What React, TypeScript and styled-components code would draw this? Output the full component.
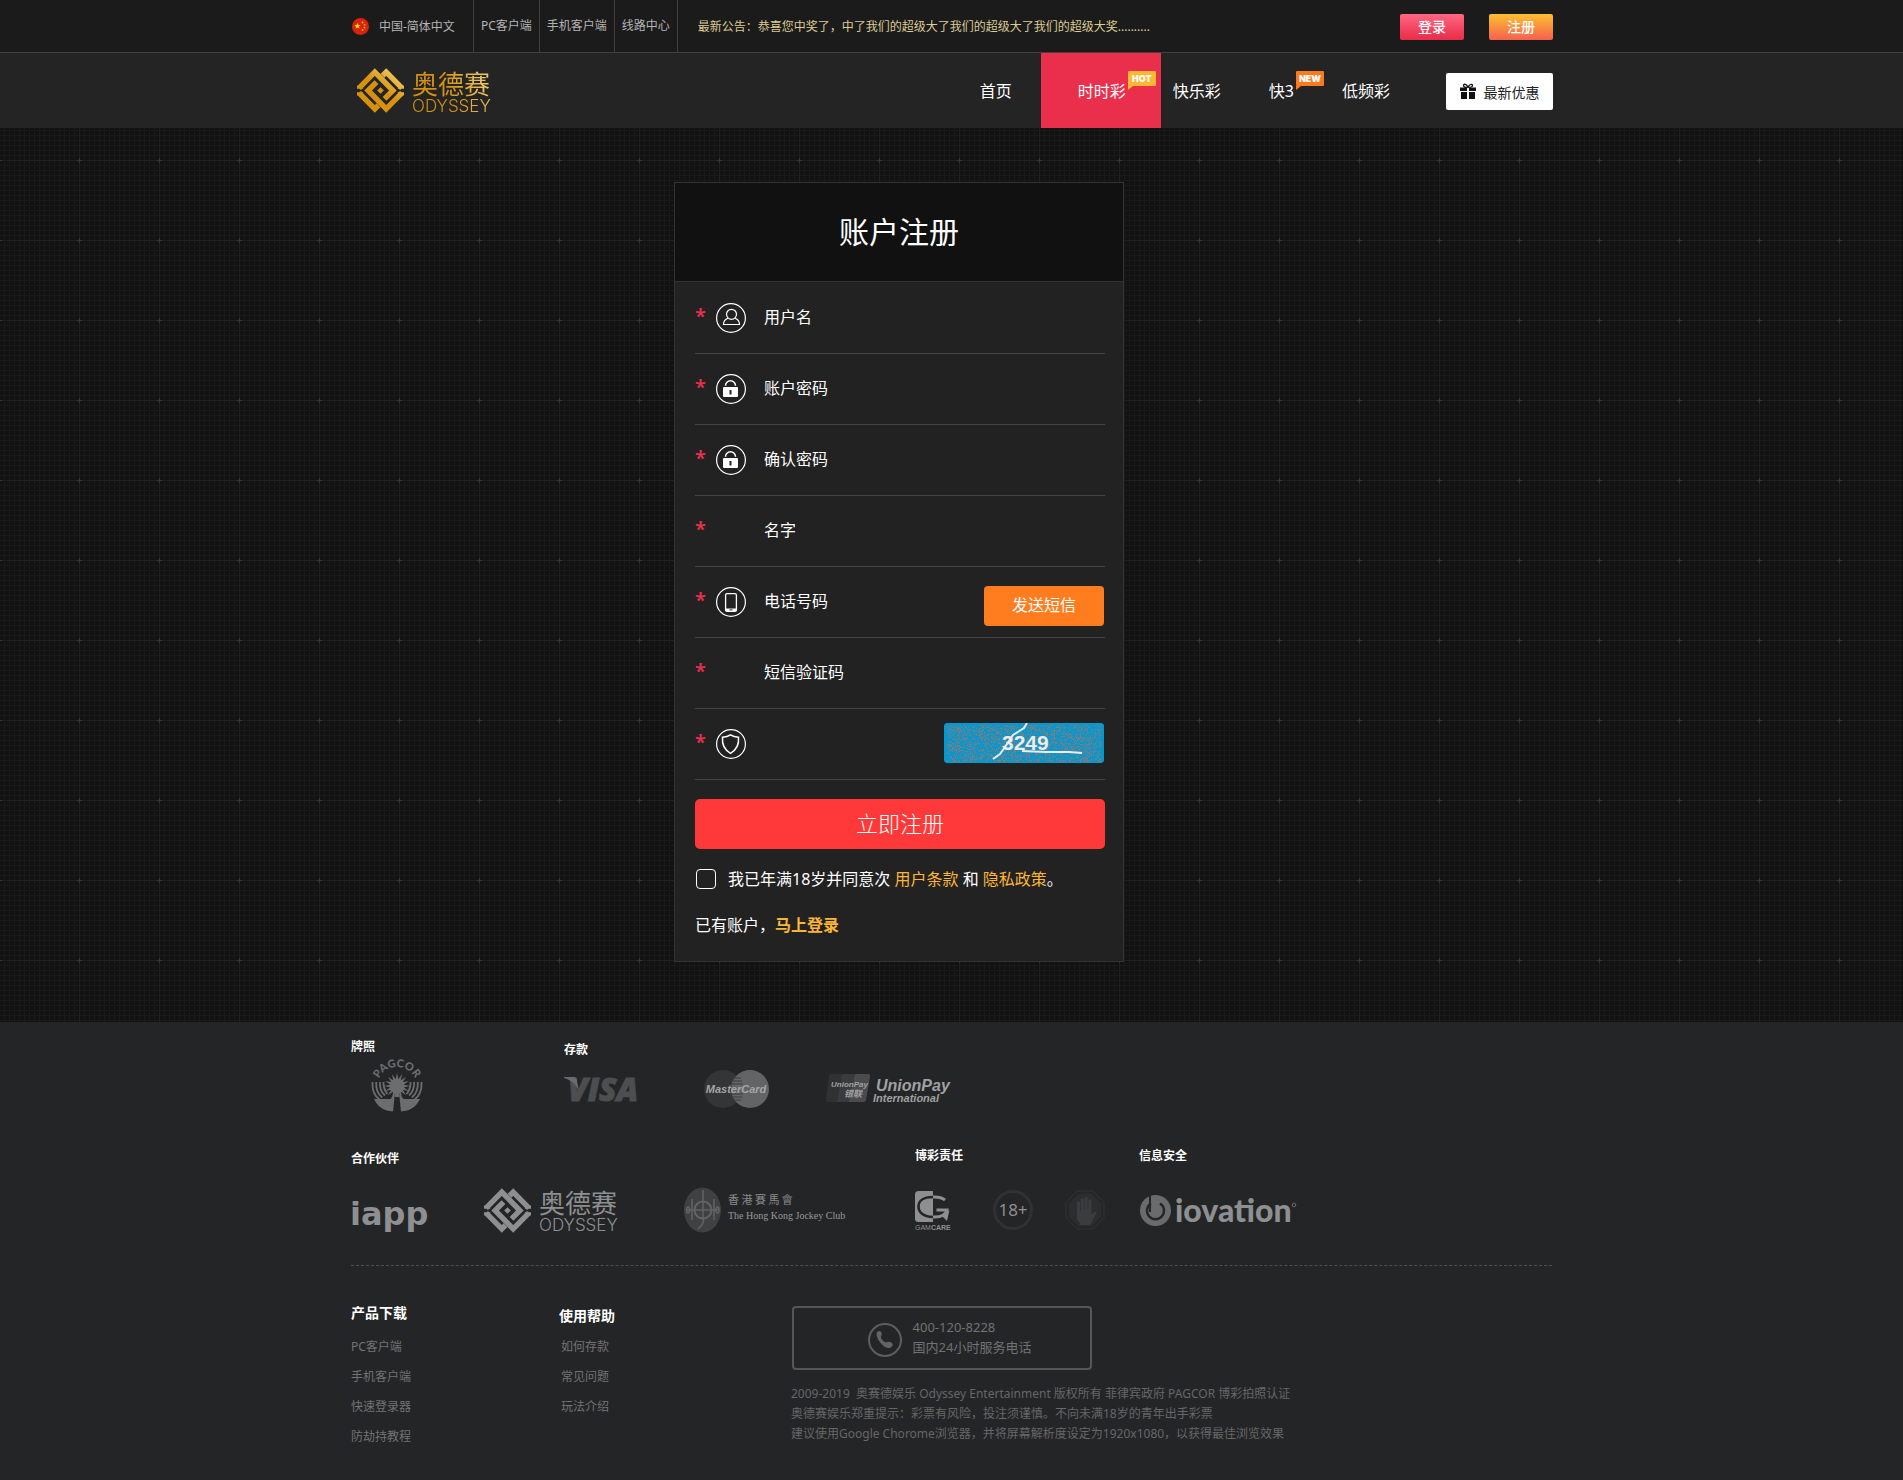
import React from "react";
import styled, { createGlobalStyle } from "styled-components";

const GlobalStyle = createGlobalStyle`
  *, *::before, *::after { box-sizing: border-box; }
  html { background: #121212; }
  body {
    margin: 0;
    min-height: 100vh;
    font-family: "Noto Sans", "Noto Sans CJK SC", sans-serif;
    font-size: 12px;
    line-height: 18px;
    color: #fff;
    background-color: #121212;
    background-image:
      conic-gradient(at 5px 1px, transparent 0 270deg, #373737 270deg 360deg),
      conic-gradient(at 1px 5px, transparent 0 270deg, #373737 270deg 360deg),
      linear-gradient(to right, #202020 1px, transparent 1px),
      linear-gradient(to bottom, #202020 1px, transparent 1px),
      linear-gradient(to right, #191919 1px, transparent 1px),
      linear-gradient(to bottom, #191919 1px, transparent 1px);
    background-size: 80px 80px, 80px 80px, 80px 80px, 80px 80px, 5px 5px, 5px 5px;
    background-position: 77px 0, 79px 78px, 79px 0, 0 0, 4px 0, 0 0;
  }
  a { color: inherit; text-decoration: none; }
  button, input { font-family: inherit; margin: 0; }
  button { cursor: pointer; border: 0; padding: 0; }
  ul { list-style: none; margin: 0; padding: 0; }
  h1, h2, p { margin: 0; }
  svg { display: block; overflow: visible; }
`;

const Container = styled.div`
  width: 100%;
  max-width: 1203px;
  margin: 0 auto;
`;

/* ---------- top bar ---------- */

const TopBar = styled.div`
  background: #1b1b1b;
  border-bottom: 1px solid #404040;
`;

const TopInner = styled(Container)`
  display: flex;
  align-items: center;
  height: 52px;
`;

const Language = styled.button`
  display: flex;
  align-items: center;
  gap: 10px;
  height: 100%;
  padding: 0 18px 0 2px;
  background: none;
  color: #b4b4b4;
  font-size: 12px;
  border-right: 1px solid #404040;
`;

const TopLink = styled.a`
  display: flex;
  align-items: center;
  height: 100%;
  padding: 0 7px;
  color: #b4b4b4;
  border-right: 1px solid #404040;
`;

const Notice = styled.p`
  margin-left: 20px;
  padding-top: 2px;
  color: #dccb96;
`;

const AuthButtons = styled.div`
  display: flex;
  gap: 25px;
  margin-left: auto;
  padding-top: 2px;
`;

const AuthButton = styled.button<{ $from: string; $to: string }>`
  width: 64px;
  height: 26px;
  border-radius: 2px;
  color: #fff;
  font-size: 14px;
  line-height: 24px;
  font-weight: 500;
  background: linear-gradient(${(p) => p.$from}, ${(p) => p.$to});
`;

/* ---------- navigation ---------- */

const Header = styled.header`
  background: #242424;
`;

const HeaderInner = styled(Container)`
  display: flex;
  align-items: center;
  height: 75px;
  padding-left: 7px;
`;

const Brand = styled.div`
  display: flex;
  align-items: center;
  gap: 8px;
`;

const BrandWords = styled.div<{ $muted?: boolean }>`
  display: flex;
  flex-direction: column;
  padding-top: 4px;
  color: ${(p) => (p.$muted ? "#8e8f91" : "transparent")};
  background: ${(p) => (p.$muted ? "none" : "linear-gradient(75deg, #d6920f 45%, #f2d277)")};
  background-clip: text;
  -webkit-background-clip: text;
`;

const BrandName = styled.span`
  font-family: "Noto Sans CJK SC", sans-serif;
  font-size: 26px;
  line-height: 26px;
`;

const BrandLatin = styled.span`
  font-family: Inter, sans-serif;
  font-size: 17px;
  line-height: 20px;
  font-weight: 300;
`;

const Nav = styled.nav`
  display: flex;
  align-items: center;
  height: 100%;
  margin-left: auto;
`;

const NavLink = styled.a<{ $active?: boolean }>`
  display: flex;
  align-items: center;
  justify-content: center;
  height: 100%;
  margin-left: ${(p) => (p.$active ? 29 : 48)}px;
  width: ${(p) => (p.$active ? "120px" : "auto")};
  margin-right: ${(p) => (p.$active ? -36 : 0)}px;
  padding-left: ${(p) => (p.$active ? 2 : 0)}px;
  background: ${(p) => (p.$active ? "#ea2f4c" : "none")};
  font-size: 16px;
  line-height: 22px;
`;

const NavText = styled.span`
  position: relative;
`;

const Badge = styled.span<{ $color: string }>`
  position: absolute;
  left: 100%;
  top: -9px;
  width: 28px;
  height: 15px;
  margin-left: 2px;
  border-radius: 1px;
  background: ${(p) => p.$color};
  font-family: Inter, sans-serif;
  font-size: 9px;
  line-height: 15px;
  font-weight: 900;
  text-align: center;
  color: #fff;

  &::after {
    content: "";
    position: absolute;
    left: 0;
    top: 15px;
    border-top: 4px solid ${(p) => p.$color};
    border-right: 5px solid transparent;
  }
`;

const PromoButton = styled.button`
  display: flex;
  align-items: center;
  justify-content: center;
  gap: 8px;
  width: 107px;
  height: 37px;
  margin-top: 2px;
  margin-left: 56px;
  border-radius: 2px;
  background: #fff;
  color: #222;
  font-size: 14px;
`;

/* ---------- registration card ---------- */

const Main = styled.main`
  padding: 54px 0 60px;
`;

const Card = styled.form`
  width: 450px;
  max-width: 100%;
  margin-left: 324px;
  border: 1px solid #333;
  background: #222;
`;

const CardTitle = styled.h1`
  display: flex;
  align-items: center;
  justify-content: center;
  height: 99px;
  background: #111;
  border-bottom: 1px solid #333;
  font-size: 30px;
  line-height: 40px;
  font-weight: 400;
`;

const CardBody = styled.div`
  padding: 1px 18px 24px 20px;
`;

const Row = styled.div`
  display: flex;
  align-items: center;
  height: 71px;
  padding-right: 1px;
  border-bottom: 1px solid #444;
`;

const Required = styled.span`
  width: 21px;
  margin-bottom: 4px;
  color: #ea2f4c;
  font-size: 20px;
  line-height: 20px;
  font-weight: 600;
`;

const IconSlot = styled.span`
  width: 30px;
  height: 30px;
  margin-right: 18px;
`;

const FieldLabel = styled.label`
  margin-bottom: 2px;
  font-size: 16px;
  line-height: 22px;
`;

const FieldInput = styled.input`
  flex: 1;
  min-width: 0;
  height: 40px;
  margin-left: 8px;
  border: 0;
  outline: 0;
  background: transparent;
  color: #fff;
  font-size: 16px;
`;

const SmsButton = styled.button`
  align-self: flex-end;
  width: 120px;
  height: 40px;
  margin-bottom: 11px;
  padding-bottom: 2px;
  border-radius: 4px;
  background: #ff7d1f;
  color: #fff;
  font-size: 16px;
  line-height: 22px;
`;

const CaptchaButton = styled.button`
  width: 160px;
  height: 40px;
  margin-bottom: 2px;
  border-radius: 4px;
  overflow: hidden;
  background: #0b97cf;
`;

const Submit = styled.button`
  width: 100%;
  height: 50px;
  margin-top: 19px;
  padding-bottom: 2px;
  border-radius: 5px;
  background: #ff3939;
  color: #fff;
  font-size: 22px;
  line-height: 30px;
  font-weight: 300;
`;

const Agree = styled.div`
  display: flex;
  align-items: center;
  gap: 12px;
  margin: 19px 0 24px;
  padding-left: 1px;
  font-size: 16px;
  line-height: 22px;
`;

const Checkbox = styled.input`
  appearance: none;
  width: 20px;
  height: 20px;
  border: 1px solid #fff;
  border-radius: 4px;

  &:checked {
    background: #fbb636;
  }
`;

const GoldLink = styled.a<{ $bold?: boolean }>`
  color: #fbb636;
  font-weight: ${(p) => (p.$bold ? 700 : 400)};
`;

const LoginHint = styled.p`
  padding-bottom: 1px;
  font-size: 16px;
  line-height: 22px;
`;

/* ---------- footer ---------- */

const Footer = styled.footer`
  background: #242527;
`;

const FooterInner = styled(Container)`
  padding: 17px 1px 29px;
`;

const LogoRow = styled.section<{ $height: number }>`
  display: flex;
  align-items: flex-start;
  height: ${(p) => p.$height}px;
`;

const LogoGroup = styled.div<{ $width?: number; $drop?: number }>`
  width: ${(p) => (p.$width ? p.$width + "px" : "auto")};
  padding-top: ${(p) => p.$drop || 0}px;
`;

const GroupTitle = styled.h2`
  font-size: 12px;
  line-height: 16px;
  font-weight: 700;
`;

const Logos = styled.div<{ $gap: number; $top: number; $height: number; $indent?: number }>`
  display: flex;
  align-items: center;
  gap: ${(p) => p.$gap}px;
  height: ${(p) => p.$height}px;
  margin-top: ${(p) => p.$top}px;
  padding-left: ${(p) => p.$indent || 0}px;
`;

const FooterBottom = styled.div`
  display: flex;
  align-items: flex-start;
  border-top: 1px dashed #4c4d4f;
  padding-top: 37px;
`;

const LinkColumn = styled.div<{ $width: number; $drop?: number }>`
  width: ${(p) => p.$width}px;
  padding-top: ${(p) => p.$drop || 0}px;
`;

const ColumnTitle = styled.h2`
  font-size: 14px;
  line-height: 20px;
  font-weight: 700;
`;

const Links = styled.ul<{ $top: number; $indent?: number }>`
  margin-top: ${(p) => p.$top}px;
  padding-left: ${(p) => p.$indent || 0}px;
  color: #737373;
  line-height: 30px;
`;

const Contact = styled.div`
  padding-top: 3px;
`;

const PhoneBox = styled.a`
  display: flex;
  align-items: center;
  justify-content: center;
  gap: 11px;
  width: 300px;
  height: 64px;
  margin-left: 1px;
  padding-right: 16px;
  padding-left: 31px;
  border: 2px solid #555658;
  border-radius: 4px;
  color: #717273;
  font-size: 13px;
  line-height: 20px;

  svg {
    margin-top: 4px;
  }
`;

const PhoneText = styled.span`
  margin-bottom: 2px;
`;

const Legal = styled.p`
  margin-top: 14px;
  color: #666768;
  line-height: 20px;
  white-space: pre-line;
`;

/* ---------- drawings ---------- */

const Flag = () => (
  <svg width="17" height="17" viewBox="0 0 17 17" aria-hidden="true">
    <circle cx="8.500" cy="8.500" r="8.500" fill="#d9230f" />
    <path d="M5.500 5l.9 1.900 2.100.2-1.600 1.400.5 2-1.900-1.100-1.900 1.100.5-2L2.500 7.100l2.100-.2z" fill="#ffde00" />
    <g fill="#ffb400">
      <circle cx="10.500" cy="4.500" r=".9" />
      <circle cx="12.600" cy="6.800" r=".9" />
      <circle cx="12.600" cy="9.600" r=".9" />
      <circle cx="10.500" cy="12" r=".9" />
    </g>
  </svg>
);

const OdysseyMark = ({ muted }: { muted?: boolean }) => (
  <svg width="47" height="45" viewBox="0 0 140 134" aria-hidden="true">
    <defs>
      <linearGradient id="gold" gradientUnits="userSpaceOnUse" x1="30" y1="110" x2="110" y2="10">
        <stop offset="0.5" stopColor="#d6920f" />
        <stop offset="1" stopColor="#f0c95f" />
      </linearGradient>
    </defs>
    <g fill="none" stroke={muted ? "#8e8f91" : "url(#gold)"} strokeWidth="16" strokeMiterlimit="10">
      <path d="M6 60L53 12 107 67 82 92" />
      <path d="M134 60L87 12 76 23" />
      <path d="M134 74L87 122 33 67 58 42" />
      <path d="M6 74L53 122 64 111" />
    </g>
    <path d="M0 62V52L8 54 20 62zM140 62V52L132 54 120 62zM0 72V82L8 80 20 72zM140 72V82L132 80 120 72zM70 57L80 67 70 77 60 67z" fill={muted ? "#8e8f91" : "url(#gold)"} />
  </svg>
);

const OdysseyLogo = ({ muted }: { muted?: boolean }) => (
  <Brand>
    <OdysseyMark muted={muted} />
    <BrandWords $muted={muted}>
      <BrandName>奥德赛</BrandName>
      <BrandLatin>ODYSSEY</BrandLatin>
    </BrandWords>
  </Brand>
);

const Gift = () => (
  <svg width="16" height="15" viewBox="0 0 16 15" fill="#111" aria-hidden="true">
    <path d="M0 3.500h7v3.500H0zM9 3.500h7v3.500H9zM1 8h6v7H1zM9 8h6v7H9z" />
    <path d="M7.500 3.500C5 3.500 3 2.600 3.500 1S6.500.5 8 3c1.500-2.500 4-3.500 4.500-2s-1.500 2.500-4 2.500" fill="none" stroke="#111" strokeWidth="1.300" />
  </svg>
);

const Ring = ({ children }: { children: React.ReactNode }) => (
  <svg width="30" height="30" viewBox="0 0 30 30" fill="none" stroke="#fff" aria-hidden="true">
    <circle cx="15" cy="15" r="14.400" strokeWidth="1.200" />
    {children}
  </svg>
);

const UserIcon = () => (
  <Ring>
    <circle cx="15.500" cy="11.300" r="5" strokeWidth="1.200" />
    <path d="M12 15.300c-3 1.100-4.500 3.400-4.500 6.200h16c0-2.800-1.500-5.100-4.500-6.200" strokeWidth="1.200" />
  </Ring>
);

const LockIcon = () => (
  <Ring>
    <path d="M9.500 11.800a5 5 0 0 1 10 0" strokeWidth="1.500" />
    <rect x="7" y="13" width="15" height="10" rx="1" fill="#fff" stroke="none" />
    <rect x="13.500" y="16" width="2" height="4.500" fill="#222" stroke="none" />
  </Ring>
);

const PhoneIcon = () => (
  <Ring>
    <rect x="9.600" y="6.600" width="10.800" height="17.800" rx="1.500" strokeWidth="1.300" />
    <path d="M9.500 21.500h11v2.500h-11z" fill="#fff" stroke="none" />
    <path d="M13.500 22.900h3" stroke="#222" />
  </Ring>
);

const ShieldIcon = () => (
  <Ring>
    <path d="M14.500 5.800c2.400 1.700 4.900 2.300 8 2.500.6 6.600-1.400 12.300-8 16-6.600-3.700-8.600-9.400-8-16 3.100-.2 5.600-.8 8-2.500z" strokeWidth="1.500" />
  </Ring>
);

const speckles = (() => {
  let seed = 7;
  let d = "";
  const next = () => (seed = (seed * 16807) % 2147483647) / 2147483647;
  for (let y = 2; y < 39; y++) {
    for (let x = 3; x < 157; x++) {
      if (next() < 0.36) d += `M${x} ${y}h1v1h-1z`;
    }
  }
  return d;
})();

const Captcha = () => (
  <svg width="160" height="40" viewBox="0 0 160 40" role="img" aria-label="3249">
    <rect width="160" height="40" fill="#0498cf" />
    <path d={speckles} fill="#7b7d83" shapeRendering="crispEdges" />
    <text x="58" y="27" fill="#ececec" fontFamily="Liberation Sans, sans-serif" fontWeight="700" fontSize="21">
      3249
    </text>
    <path d="M49 36L56 31 61 24 69 12 80 5 83 0M78 28L102 29 125 29 138 30" fill="none" stroke="#ececec" strokeWidth="2" />
  </svg>
);

const Pagcor = () => {
  const rays = Array.from({ length: 16 }, (_, i) => i * 22.5);
  return (
    <svg width="52" height="52" viewBox="0 0 52 52" fill="#6c6d6f" role="img" aria-label="PAGCOR">
      <defs>
        <path id="pagcor-arc" d="M6 27A20 20 0 0 1 46 27" />
      </defs>
      <text fontFamily="Lato, sans-serif" fontWeight="900" fontSize="11">
        <textPath href="#pagcor-arc" startOffset="50%" textAnchor="middle">
          PAGCOR
        </textPath>
      </text>
      <circle cx="26" cy="26" r="7.500" />
      {rays.map((a) => (
        <path key={a} d="M24.500 20h3L26 13z" transform={`rotate(${a} 26 26)`} />
      ))}
      <g fill="none" stroke="#6c6d6f" strokeWidth="1.800">
        <path d="M1.500 22C1 30 3 36 9 40M5.200 22c-.4 7 1.500 12 6 15.500M8.900 22c-.3 6 1 10 5 13.500M12.500 22c-.2 4.500 1 8.500 4 12" />
        <path d="M50.500 22C51 30 49 36 43 40M46.800 22c.4 7-1.500 12-6 15.500M43.100 22c.3 6-1 10-5 13.500M39.500 22c.2 4.500-1 8.500-4 12" />
      </g>
      <path d="M3 39h16.500l3-4h1.500v16.500C13.500 51.500 6.500 47 3 39zM49 39H32.500l-3-4H28v16.500C38.500 51.500 45.500 47 49 39z" />
      <path d="M24 32h4l2 20h-8z" fill="#242527" />
      <path d="M23.500 31h5v6h-5z" />
    </svg>
  );
};

const sans = '"Liberation Sans", sans-serif';

const Visa = () => (
  <svg width="83" height="24" viewBox="0 0 83 24" role="img" aria-label="VISA">
    <text x="4" y="24" fill="#4d4e50" stroke="#4d4e50" fontFamily="Open Sans, sans-serif" fontStyle="italic" fontWeight="800" fontSize="32">
      VISA
    </text>
    <path d="M0 0h9.500c2 0 2.800 1 3.200 2.600L15 14C12 7.500 7 3 0 1z" fill="#6a6b6d" />
  </svg>
);

const MasterCard = () => (
  <svg width="65" height="38" viewBox="0 0 65 38" role="img" aria-label="MasterCard">
    <circle cx="19" cy="19" r="19" fill="#343537" />
    <circle cx="46" cy="19" r="19" fill="#636466" />
    <path d="M28 8h9M27 11h11M27 14h12M27 24h12M27 27h11M28 30h9" stroke="#3b3c3e" strokeWidth="1.200" />
    <text x="32" y="23" textAnchor="middle" fill="#a5a6a8" fontFamily={sans} fontStyle="italic" fontWeight="700" fontSize="11">
      MasterCard
    </text>
  </svg>
);

const UnionPay = () => (
  <svg width="130" height="32" viewBox="0 0 130 32" role="img" aria-label="UnionPay International">
    <path d="M5 1h12l-5 28H2c-2 0-2-1-2-3l3-23q.5-2 2-2z" fill="#303133" />
    <path d="M16 1h13l-5 28H11z" fill="#3a3b3d" />
    <path d="M29 1h13c2 0 2 1 2 3l-4 23q-.5 2-2 2H23z" fill="#4a4b4d" />
    <g fill="#a0a1a3" fontFamily={sans} fontStyle="italic" fontWeight="700">
      <text x="5" y="14" fontSize="8">UnionPay</text>
      <text x="18" y="24" fontSize="9" fontFamily="Noto Sans CJK SC">银联</text>
      <text x="50" y="18" fontSize="16">UnionPay</text>
      <text x="47" y="29" fontSize="11">International</text>
    </g>
  </svg>
);

const Iapp = () => (
  <svg width="78" height="46" viewBox="0 0 78 46" role="img" aria-label="iapp">
    <text x="-2" y="38" fill="#8e8f91" fontFamily="DejaVu Sans, sans-serif" fontWeight="700" fontSize="32">
      iapp
    </text>
  </svg>
);

const JockeyClub = () => (
  <svg width="180" height="46" viewBox="-12 0 180 46" role="img" aria-label="The Hong Kong Jockey Club">
    <ellipse cx="18.500" cy="23" rx="18.500" ry="22.500" fill="#404143" />
    <g fill="none" stroke="#626365" strokeWidth="1.500">
      <circle cx="19" cy="23" r="8.500" strokeWidth="2" />
      <path d="M19 3v28M8 12v21M30 12v21M3 23h32M19 31c2 5-2 8-5 11" />
      <ellipse cx="4" cy="23" rx="1.500" ry="3" />
      <ellipse cx="33.500" cy="23" rx="1.500" ry="3" />
    </g>
    <text x="44" y="17" fill="#8a8b8d" fontFamily="Noto Sans CJK TC" fontSize="11">
      香 港 賽 馬 會
    </text>
    <text x="44" y="32" fill="#98999b" fontFamily="Liberation Serif, serif" fontSize="10">
      The Hong Kong Jockey Club
    </text>
  </svg>
);

const GamCare = () => (
  <svg width="46" height="40" viewBox="0 -1 46 40" role="img" aria-label="GAMCARE">
    <path d="M3.500 0H18v31H3.500Q0 31 0 27.500v-24Q0 0 3.500 0z" fill="#8e8f91" />
    <path d="M18 6C8 6 3.500 10 3.500 15.500S8 25.500 18 26" fill="none" stroke="#242527" strokeWidth="2.600" />
    <path d="M18 6c6-.3 9 .5 12 3M18 26c8 .3 13-2 14-7H21.500" fill="none" stroke="#8e8f91" strokeWidth="3" />
    <path d="M27 25l5 5 2.500-11z" fill="#8e8f91" />
    <text x="0" y="39" fill="#8e8f91" fontFamily="Liberation Sans, sans-serif" fontSize="7">
      GAM<tspan fontWeight="700">CARE</tspan>
    </text>
  </svg>
);

const Adult = () => (
  <svg width="40" height="40" viewBox="0 0 40 40" role="img" aria-label="18+">
    <circle cx="20" cy="20" r="18.500" fill="none" stroke="#303133" strokeWidth="3" />
    <text x="20" y="26" textAnchor="middle" fill="#8e8f91" fontFamily="Noto Sans, sans-serif" fontSize="17">
      18+
    </text>
  </svg>
);

const StopHand = () => (
  <svg width="40" height="40" viewBox="0 0 40 40" aria-hidden="true">
    <path d="M12.500 1h15L39 12.500v15L27.500 39h-15L1 27.500v-15z" fill="none" stroke="#333436" />
    <path d="M13.500 3.500h13l10 10v13l-10 10h-13l-10-10v-13z" fill="#2c2d2f" />
    <path d="M12 12q1.500-1.500 3 0v8h.8V9q1.500-1.500 3 0v10h.8V8q1.500-1.500 3 0v11h.8V10q1.500-1.500 3 0v15l2-2.500q2-1.500 3.500 0l-5 9-2 3.500H16l-4-6z" fill="#3b3c3e" />
  </svg>
);

const Iovation = () => (
  <svg width="160" height="32" viewBox="0 0 160 32" role="img" aria-label="iovation">
    <circle cx="16.500" cy="16.500" r="15.500" fill="#6a6b6d" />
    <path d="M12 9.500A8.500 8.500 0 1 0 21 9.500" fill="none" stroke="#242527" strokeWidth="2.400" />
    <path d="M11 0v18" stroke="#242527" strokeWidth="2" />
    <text x="36" y="28" fill="#8e8f91" fontFamily="Lato, sans-serif" fontWeight="900" fontSize="32">
      iovation
    </text>
    <circle cx="155" cy="11" r="1.800" fill="none" stroke="#6a6b6d" />
  </svg>
);

const CallIcon = () => (
  <svg width="34" height="34" viewBox="0 0 34 34" aria-hidden="true">
    <circle cx="17" cy="17" r="16" fill="none" stroke="#5d5e60" strokeWidth="2" />
    <path d="M8.500 10.500c0-1.700 2-3 3.500-2.500 1.800.7 2.300 3.800 1.200 5.300-.7 1-.2 2.200 1.500 4s3 2.500 4 2c1.600-1 4.800-.3 5.800 1.500.8 1.600-.7 3.800-2.800 4.200C16 25.800 8.500 17 8.500 10.500z" fill="#636466" />
  </svg>
);

/* ---------- page ---------- */

type Field = {
  id: string;
  label?: string;
  name?: string;
  type?: string;
  icon?: React.ReactNode;
  extra?: React.ReactNode;
};

const fields: Field[] = [
  { id: "username", label: "用户名", icon: <UserIcon /> },
  { id: "password", label: "账户密码", type: "password", icon: <LockIcon /> },
  { id: "confirm", label: "确认密码", type: "password", icon: <LockIcon /> },
  { id: "realname", label: "名字" },
  { id: "phone", label: "电话号码", type: "tel", icon: <PhoneIcon />, extra: <SmsButton type="button">发送短信</SmsButton> },
  { id: "smscode", label: "短信验证码" },
  {
    id: "captcha",
    name: "验证码",
    icon: <ShieldIcon />,
    extra: (
      <CaptchaButton type="button">
        <Captcha />
      </CaptchaButton>
    ),
  },
];

const productLinks = ["PC客户端", "手机客户端", "快速登录器", "防劫持教程"];
const helpLinks = ["如何存款", "常见问题", "玩法介绍"];

export default function App() {
  return (
    <>
      <GlobalStyle />
      <TopBar>
        <TopInner>
          <Language type="button">
            <Flag />
            中国-简体中文
          </Language>
          <TopLink href="#pc">PC客户端</TopLink>
          <TopLink href="#mobile">手机客户端</TopLink>
          <TopLink href="#lines">线路中心</TopLink>
          <Notice>最新公告：恭喜您中奖了，中了我们的超级大了我们的超级大了我们的超级大奖..........</Notice>
          <AuthButtons>
            <AuthButton type="button" $from="#ff6782" $to="#e92c49">登录</AuthButton>
            <AuthButton type="button" $from="#fcc030" $to="#f6604f">注册</AuthButton>
          </AuthButtons>
        </TopInner>
      </TopBar>

      <Header>
        <HeaderInner>
          <OdysseyLogo />
          <Nav>
            <NavLink href="#home">首页</NavLink>
            <NavLink href="#ssc" $active>
              <NavText>
                时时彩<Badge $color="#fdb833">HOT</Badge>
              </NavText>
            </NavLink>
            <NavLink href="#klc">快乐彩</NavLink>
            <NavLink href="#k3">
              <NavText>
                快3<Badge $color="#ff7a1c">NEW</Badge>
              </NavText>
            </NavLink>
            <NavLink href="#dpc">低频彩</NavLink>
          </Nav>
          <PromoButton type="button">
            <Gift />
            最新优惠
          </PromoButton>
        </HeaderInner>
      </Header>

      <Main>
        <Container>
          <Card onSubmit={(e) => e.preventDefault()}>
            <CardTitle>账户注册</CardTitle>
            <CardBody>
              {fields.map((f) => (
                <Row key={f.id}>
                  <Required>*</Required>
                  <IconSlot>{f.icon}</IconSlot>
                  {f.label && <FieldLabel htmlFor={f.id}>{f.label}</FieldLabel>}
                  <FieldInput id={f.id} type={f.type || "text"} aria-label={f.name} />
                  {f.extra}
                </Row>
              ))}
              <Submit type="submit">立即注册</Submit>
              <Agree>
                <Checkbox id="agree" type="checkbox" />
                <label htmlFor="agree">
                  我已年满18岁并同意次 <GoldLink href="#terms">用户条款</GoldLink> 和 <GoldLink href="#privacy">隐私政策</GoldLink>。
                </label>
              </Agree>
              <LoginHint>
                已有账户，<GoldLink href="#login" $bold>马上登录</GoldLink>
              </LoginHint>
            </CardBody>
          </Card>
        </Container>
      </Main>

      <Footer>
        <FooterInner>
          <LogoRow $height={109}>
            <LogoGroup $width={213}>
              <GroupTitle>牌照</GroupTitle>
              <Logos $gap={0} $top={5} $height={52} $indent={20}>
                <Pagcor />
              </Logos>
            </LogoGroup>
            <LogoGroup $drop={3}>
              <GroupTitle>存款</GroupTitle>
              <Logos $gap={57} $top={12} $height={38}>
                <Visa />
                <MasterCard />
                <UnionPay />
              </Logos>
            </LogoGroup>
          </LogoRow>

          <LogoRow $height={117}>
            <LogoGroup $width={564} $drop={3}>
              <GroupTitle>合作伙伴</GroupTitle>
              <Logos $gap={54} $top={20} $height={46} $indent={1}>
                <Iapp />
                <OdysseyLogo muted />
                <JockeyClub />
              </Logos>
            </LogoGroup>
            <LogoGroup $width={224}>
              <GroupTitle>博彩责任</GroupTitle>
              <Logos $gap={32} $top={23} $height={46}>
                <GamCare />
                <Adult />
                <StopHand />
              </Logos>
            </LogoGroup>
            <LogoGroup>
              <GroupTitle>信息安全</GroupTitle>
              <Logos $gap={0} $top={23} $height={46}>
                <Iovation />
              </Logos>
            </LogoGroup>
          </LogoRow>

          <FooterBottom>
            <LinkColumn $width={208}>
              <ColumnTitle>产品下载</ColumnTitle>
              <Links $top={9}>
                {productLinks.map((t) => (
                  <li key={t}>
                    <a href="#download">{t}</a>
                  </li>
                ))}
              </Links>
            </LinkColumn>
            <LinkColumn $width={232} $drop={3}>
              <ColumnTitle>使用帮助</ColumnTitle>
              <Links $top={6} $indent={2}>
                {helpLinks.map((t) => (
                  <li key={t}>
                    <a href="#help">{t}</a>
                  </li>
                ))}
              </Links>
            </LinkColumn>
            <Contact>
              <PhoneBox href="tel:400-120-8228">
                <CallIcon />
                <PhoneText>
                  400-120-8228
                  <br />
                  国内24小时服务电话
                </PhoneText>
              </PhoneBox>
              <Legal>
                {"2009-2019 \u00a0奥赛德娱乐 Odyssey Entertainment 版权所有 菲律宾政府 PAGCOR 博彩拍照认证\n奥德赛娱乐郑重提示：彩票有风险，投注须谨慎。不向未满18岁的青年出手彩票\n建议使用Google Chorome浏览器，并将屏幕解析度设定为1920x1080，以获得最佳浏览效果"}
              </Legal>
            </Contact>
          </FooterBottom>
        </FooterInner>
      </Footer>
    </>
  );
}
